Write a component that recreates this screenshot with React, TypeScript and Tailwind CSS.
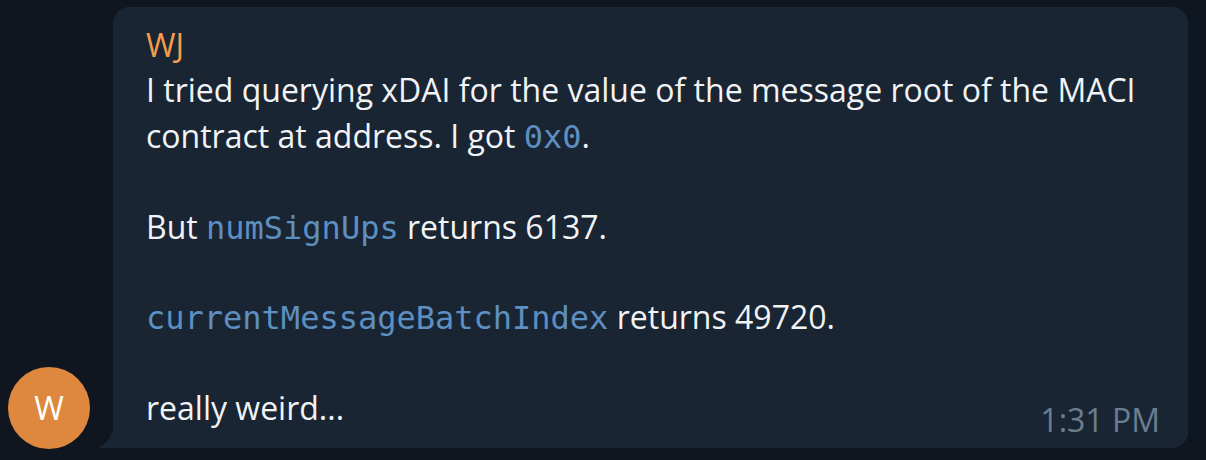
const code = "font-['DejaVu_Sans_Mono',monospace] text-[#5d8fc0] text-[32px] leading-none";

function Tail() {
  return (
    <svg
      className="absolute bottom-0 -left-[15px]"
      width="16"
      height="30"
      viewBox="0 0 16 30"
    >
      <path d="M16 0 C16 14 12 24 0 30 L16 30 Z" fill="#1a2533" />
    </svg>
  );
}

export default function App() {
  return (
    <div className="w-[1206px] h-[460px] bg-[#0f1620] font-['Open_Sans',sans-serif] flex items-end pl-2 pt-[7px] pb-[12px] overflow-hidden">
      <div className="w-[82px] h-[82px] rounded-full bg-[#dd883e] flex items-center justify-center text-white text-[32px] shrink-0 mb-[-1px]">
        W
      </div>
      <div className="relative ml-[23px] w-[1075px] h-full bg-[#1a2533] rounded-2xl rounded-bl-none pl-[33px] pr-[28px] pt-[15px] text-[32px] leading-[45.4px] text-[#f1f3f5]">
        <Tail />
        <div className="text-[#f39c4b]">WJ</div>
        <p>
          I tried querying xDAI for the value of the message root of the MACI
          contract at address. I got <span className={code}>0x0</span>.
        </p>
        <p>&nbsp;</p>
        <p>
          But <span className={code}>numSignUps</span> returns 6137.
        </p>
        <p>&nbsp;</p>
        <p>
          <span className={code}>currentMessageBatchIndex</span> returns 49720.
        </p>
        <p>&nbsp;</p>
        <div className="flex items-end justify-between">
          <span>really weird...</span>
          <span className="text-[#6b7e90] translate-y-[12px]">1:31 PM</span>
        </div>
      </div>
    </div>
  );
}
